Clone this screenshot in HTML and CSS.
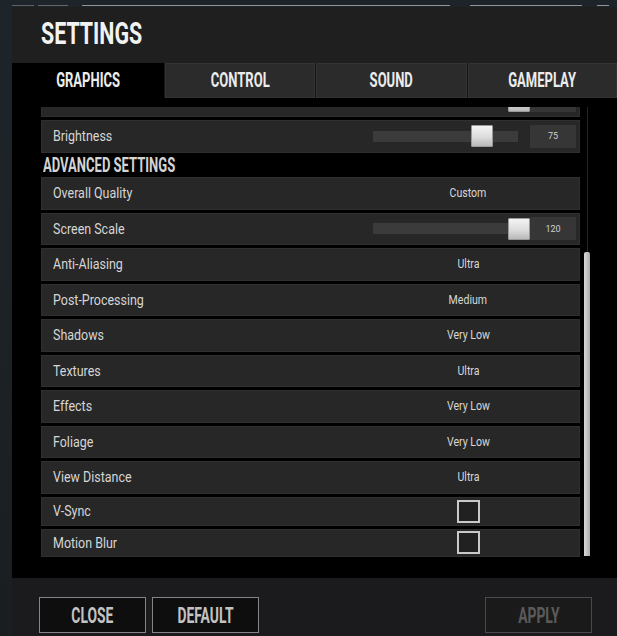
FILE: index.html
```html
<!DOCTYPE html>
<html lang="en">
<head>
<meta charset="utf-8">
<title>Settings</title>
<link rel="stylesheet" href="styles.css">
</head>
<body>
<div class="strip">
  <span class="seg seg-a"></span><span class="seg seg-b"></span><span class="seg seg-c"></span><span class="seg seg-d"></span><span class="seg seg-e"></span>
</div>
<div class="window">
  <header class="header">
    <h1 class="title"><span class="cond">SETTINGS</span></h1>
  </header>
  <nav class="tabs">
    <div class="tab active"><span class="cond">GRAPHICS</span></div>
    <div class="tab"><span class="cond">CONTROL</span></div>
    <div class="tab"><span class="cond">SOUND</span></div>
    <div class="tab"><span class="cond">GAMEPLAY</span></div>
  </nav>
  <section class="content">
    <div class="viewport">
      <div class="list">
        <div class="row row-cut">
          <span class="label"></span>
          <div class="ctl slider"><div class="track"><div class="knob" style="left:135px"></div></div><div class="num"></div></div>
        </div>
        <div class="row">
          <span class="label">Brightness</span>
          <div class="ctl slider"><div class="track"><div class="knob" style="left:98px"></div></div><div class="num">75</div></div>
        </div>
        <div class="section"><span class="cond">ADVANCED SETTINGS</span></div>
        <div class="row"><span class="label">Overall Quality</span><div class="ctl"><span class="val">Custom</span></div></div>
        <div class="row">
          <span class="label">Screen Scale</span>
          <div class="ctl slider"><div class="track"><div class="knob" style="left:135px"></div></div><div class="num">120</div></div>
        </div>
        <div class="row"><span class="label">Anti-Aliasing</span><div class="ctl"><span class="val">Ultra</span></div></div>
        <div class="row"><span class="label">Post-Processing</span><div class="ctl"><span class="val">Medium</span></div></div>
        <div class="row"><span class="label">Shadows</span><div class="ctl"><span class="val">Very Low</span></div></div>
        <div class="row"><span class="label">Textures</span><div class="ctl"><span class="val">Ultra</span></div></div>
        <div class="row"><span class="label">Effects</span><div class="ctl"><span class="val">Very Low</span></div></div>
        <div class="row"><span class="label">Foliage</span><div class="ctl"><span class="val">Very Low</span></div></div>
        <div class="row"><span class="label">View Distance</span><div class="ctl"><span class="val">Ultra</span></div></div>
        <div class="row row-check"><span class="label">V-Sync</span><div class="ctl"><span class="check"></span></div></div>
        <div class="row row-check row-last"><span class="label">Motion Blur</span><div class="ctl"><span class="check"></span></div></div>
      </div>
      <div class="scroll">
        <div class="scroll-line"></div>
        <div class="scroll-thumb"></div>
      </div>
    </div>
  </section>
  <footer class="footer">
    <button class="btn"><span class="cond">CLOSE</span></button>
    <button class="btn"><span class="cond">DEFAULT</span></button>
    <button class="btn btn-disabled"><span class="cond">APPLY</span></button>
  </footer>
</div>
</body>
</html>
```
FILE: styles.css
```css
* { box-sizing: border-box; }

html, body {
  margin: 0;
  padding: 0;
}

body {
  width: 617px;
  height: 636px;
  overflow: hidden;
  background: linear-gradient(180deg, #1e252a 0%, #1c2124 60%, #1b1e20 100%);
  font-family: Roboto, "Liberation Sans", sans-serif;
  color: #d4d4d4;
}

.cond {
  display: inline-block;
  white-space: nowrap;
}

/* top strip of game background */
.strip {
  height: 7px;
  display: flex;
  align-items: flex-end;
  padding-bottom: 1px;
}
.seg {
  height: 1.5px;
  background: #8f969a;
}
.seg-a { margin-left: 12px; width: 22px; opacity: .55; }
.seg-b { margin-left: 4px; width: 30px; opacity: .6; }
.seg-c { margin-left: 14px; width: 368px; }
.seg-d { margin-left: 20px; width: 112px; }
.seg-e { margin-left: 15px; width: 12px; }

.window {
  margin-left: 12px;
  width: 605px;
  display: flex;
  flex-direction: column;
}

/* header */
.header {
  height: 56px;
  background: #1f1f1f;
  padding-left: 29px;
  padding-top: 11px;
}
.title {
  margin: 0;
  font-family: Roboto, "Liberation Sans", sans-serif;
  font-weight: 700;
  font-size: 31px;
  line-height: 1;
  color: #f2f2f2;
}
.title .cond {
  transform: scaleX(.69);
  transform-origin: left center;
}

/* tabs */
.tabs {
  height: 35px;
  display: grid;
  grid-template-columns: 152px 150px 151px 149px;
  column-gap: 1px;
  background: #141414;
}
.tab {
  display: flex;
  align-items: center;
  justify-content: center;
  background: #2b2b2b;
  box-shadow: inset 0 0 0 1px #343434;
  font-weight: 700;
  font-size: 20px;
  color: #ececec;
  padding-bottom: 2px;
}
.tab .cond { transform: scaleX(.65); }
.tab.active {
  background: #000;
  box-shadow: none;
}

/* content */
.content {
  height: 480px;
  background: #000;
  padding-top: 9px;
  padding-left: 29px;
}
.viewport {
  display: flex;
  height: 460px;
  overflow: hidden;
}
.list {
  width: 539px;
  display: flex;
  flex-direction: column;
  gap: 3px;
}
.row {
  flex: none;
  height: 32.5px;
  display: flex;
  align-items: center;
  background: #272727;
  border: 1px solid #2f2f2f;
  padding-left: 11px;
}
.row-cut { margin-top: -22.5px; }
.row-check { height: 29px; }
.row-last { height: 28px; }

.label {
  display: inline-block;
  font-size: 14px;
  color: #d6d6d6;
  transform: scaleX(.89);
  transform-origin: left center;
  white-space: nowrap;
}

.ctl {
  margin-left: auto;
  width: 222px;
  height: 100%;
  display: flex;
  align-items: center;
  justify-content: center;
}
.val {
  display: inline-block;
  font-size: 12px;
  color: #d8d8d8;
  transform: scaleX(.88);
  white-space: nowrap;
}

.ctl.slider {
  justify-content: flex-start;
  padding-left: 16px;
}
.track {
  position: relative;
  width: 145px;
  height: 11px;
  background: #3b3b3b;
}
.knob {
  position: absolute;
  top: -5.5px;
  width: 22px;
  height: 22px;
  background: linear-gradient(180deg, #f4f4f4 0%, #dcdcdc 55%, #b9b9b9 100%);
  border: 1px solid #9a9a9a;
  border-radius: 1px;
}
.num {
  margin-left: 12px;
  width: 46px;
  height: 23px;
  background: #363636;
  display: flex;
  align-items: center;
  justify-content: center;
  font-size: 9px;
  color: #cfcfcf;
}

.check {
  width: 23px;
  height: 23px;
  border: 2px solid #c9c9c9;
  background: #212121;
}

.section {
  flex: none;
  height: 18.5px;
  line-height: 18.5px;
  padding-left: 2px;
  font-weight: 700;
  font-size: 21px;
  color: #d4d4d4;
}
.section .cond {
  transform: scaleX(.62);
  transform-origin: left center;
}

/* scrollbar */
.scroll {
  margin-left: 4px;
  width: 6px;
  display: flex;
  flex-direction: column;
  align-items: center;
}
.scroll-line {
  width: 1px;
  height: 145px;
  background: #262626;
}
.scroll-thumb {
  width: 6px;
  height: 304px;
  border-radius: 2px 2px 0 0;
  background: linear-gradient(90deg, #d8d8d8 0%, #c4c4c4 50%, #a9a9a9 100%);
}

/* footer */
.footer {
  height: 58px;
  background: #1b1a1c;
  display: flex;
  align-items: flex-start;
  padding: 19px 25px 0 27px;
  gap: 6px;
}
.btn {
  width: 107px;
  height: 36px;
  background: #0e0e0e;
  border: 1.5px solid #858585;
  color: #c2c2c2;
  font-family: Roboto, "Liberation Sans", sans-serif;
  font-weight: 700;
  font-size: 22px;
  display: flex;
  align-items: center;
  justify-content: center;
  padding: 0;
}
.btn .cond { transform: scaleX(.63); }
.btn-disabled {
  margin-left: auto;
  background: #1a1a1a;
  border-color: #4a4a4a;
  color: #5a5a5a;
}
```
